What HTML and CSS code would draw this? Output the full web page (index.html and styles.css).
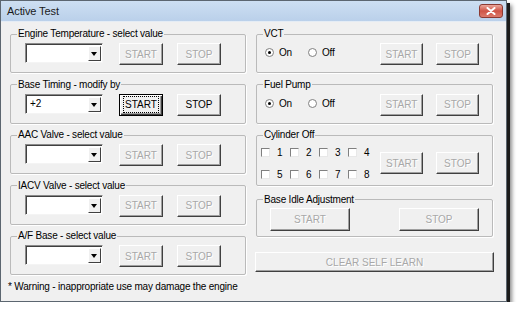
FILE: index.html
```html
<!DOCTYPE html>
<html>
<head>
    <title>Active Test</title>
    <meta charset="UTF-8">
    <link rel="stylesheet" href="styles.css">
</head>
<body>
    <div class="window">
        <div class="title-bar">
            <span class="title">Active Test</span>
            <span class="close-btn">
                <svg width="10" height="8" viewBox="0 0 10 8">
                    <path d="M1.5 1 L8.5 7 M8.5 1 L1.5 7" stroke="#fff" stroke-width="2" stroke-linecap="round"/>
                </svg>
            </span>
        </div>
        <div class="content">
            <div class="column">
                <fieldset class="group">
                    <legend>Engine Temperature - select value</legend>
                    <div class="row">
                        <div class="combo"><span class="combo-value"></span><span class="combo-arrow"></span></div>
                        <button class="btn" disabled>START</button>
                        <button class="btn" disabled>STOP</button>
                    </div>
                </fieldset>

                <fieldset class="group">
                    <legend>Base Timing - modify by</legend>
                    <div class="row">
                        <div class="combo"><span class="combo-value">+2</span><span class="combo-arrow"></span></div>
                        <button class="btn default-btn"><span class="focus-rect">START</span></button>
                        <button class="btn">STOP</button>
                    </div>
                </fieldset>

                <fieldset class="group">
                    <legend>AAC Valve - select value</legend>
                    <div class="row">
                        <div class="combo"><span class="combo-value"></span><span class="combo-arrow"></span></div>
                        <button class="btn" disabled>START</button>
                        <button class="btn" disabled>STOP</button>
                    </div>
                </fieldset>

                <fieldset class="group">
                    <legend>IACV Valve - select value</legend>
                    <div class="row">
                        <div class="combo"><span class="combo-value"></span><span class="combo-arrow"></span></div>
                        <button class="btn" disabled>START</button>
                        <button class="btn" disabled>STOP</button>
                    </div>
                </fieldset>

                <fieldset class="group">
                    <legend>A/F Base - select value</legend>
                    <div class="row">
                        <div class="combo"><span class="combo-value"></span><span class="combo-arrow"></span></div>
                        <button class="btn" disabled>START</button>
                        <button class="btn" disabled>STOP</button>
                    </div>
                </fieldset>

                <p class="warning">* Warning - inappropriate use may damage the engine</p>
            </div>

            <div class="column">
                <fieldset class="group">
                    <legend>VCT</legend>
                    <div class="row option-row">
                        <div class="radio-group">
                            <label class="option"><span class="radio checked"></span>On</label>
                            <label class="option"><span class="radio"></span>Off</label>
                        </div>
                        <button class="btn small-btn" disabled>START</button>
                        <button class="btn small-btn" disabled>STOP</button>
                    </div>
                </fieldset>

                <fieldset class="group">
                    <legend>Fuel Pump</legend>
                    <div class="row option-row">
                        <div class="radio-group">
                            <label class="option"><span class="radio checked"></span>On</label>
                            <label class="option"><span class="radio"></span>Off</label>
                        </div>
                        <button class="btn small-btn" disabled>START</button>
                        <button class="btn small-btn" disabled>STOP</button>
                    </div>
                </fieldset>

                <fieldset class="group cylinder-group">
                    <legend>Cylinder Off</legend>
                    <div class="row cylinder-row">
                        <div class="check-grid">
                            <label class="check-item"><span class="check"></span>1</label>
                            <label class="check-item"><span class="check"></span>2</label>
                            <label class="check-item"><span class="check"></span>3</label>
                            <label class="check-item"><span class="check"></span>4</label>
                            <label class="check-item"><span class="check"></span>5</label>
                            <label class="check-item"><span class="check"></span>6</label>
                            <label class="check-item"><span class="check"></span>7</label>
                            <label class="check-item"><span class="check"></span>8</label>
                        </div>
                        <button class="btn small-btn" disabled>START</button>
                        <button class="btn small-btn" disabled>STOP</button>
                    </div>
                </fieldset>

                <fieldset class="group idle-group">
                    <legend>Base Idle Adjustment</legend>
                    <div class="row idle-row">
                        <button class="btn wide-btn" disabled>START</button>
                        <button class="btn wide-btn" disabled>STOP</button>
                    </div>
                </fieldset>

                <button class="btn clear-btn" disabled>CLEAR SELF LEARN</button>
            </div>
        </div>
    </div>
</body>
</html>
```

FILE: styles.css
```css
* {
    box-sizing: border-box;
}

body {
    margin: 0;
    background: #fff;
    font-family: "Liberation Sans", Arial, sans-serif;
    font-size: 10px;
    letter-spacing: -0.2px;
    color: #000;
}

.window {
    width: 507px;
    height: 302px;
    display: flex;
    flex-direction: column;
    border: 1px solid #5c6670;
    background-color: #f0f0f0;
    box-shadow: 3px 3px 0 #1c1c1c, 5px 5px 4px rgba(0, 0, 0, 0.45);
}

.title-bar {
    height: 21px;
    display: flex;
    align-items: center;
    justify-content: space-between;
    padding: 0 3px 0 6px;
    background: linear-gradient(#cddff2, #bad0ea);
    border-bottom: 1px solid #e4ecf5;
}

.title {
    font-size: 11px;
    letter-spacing: -0.1px;
    color: #1a1a1a;
}

.close-btn {
    width: 24px;
    height: 14px;
    display: flex;
    align-items: center;
    justify-content: center;
    border: 1px solid #8c3a32;
    border-radius: 3px;
    background: linear-gradient(#eaa79c, #cf5446 50%, #dc7a6c);
}

.content {
    flex: 1;
    display: grid;
    grid-template-columns: 236px 237px;
    column-gap: 10px;
    align-items: start;
    padding: 6px 0 0 9px;
}

.column {
    display: flex;
    flex-direction: column;
    gap: 5.5px;
}

/* Group boxes */
.group {
    margin: 0;
    padding: 3px 0 7px 0;
    min-width: 0;
    border: 1px solid #bababa;
    border-radius: 2px;
    box-shadow: 1px 1px 0 #fff;
}

.group legend {
    margin-left: 6px;
    padding: 0 1px;
    line-height: 12px;
    font-size: 10px;
}

.row {
    display: flex;
    align-items: flex-start;
    padding-left: 14px;
}

/* Combo box */
.combo {
    width: 78px;
    height: 20px;
    display: flex;
    margin-right: 16px;
    background-color: #fff;
    border: 1px solid;
    border-color: #8a8a8a #f4f4f4 #f4f4f4 #8a8a8a;
    box-shadow: inset 1px 1px 0 #404040;
}

.combo-value {
    flex: 1;
    padding: 3px 0 0 4px;
}

.combo-arrow {
    width: 13px;
    margin: 2px 1px 1px 0;
    position: relative;
    background-color: #f0f0f0;
    border: 1px solid;
    border-color: #fff #404040 #404040 #fff;
}

.combo-arrow::after {
    content: "";
    position: absolute;
    left: 2px;
    top: 5px;
    border-left: 3.5px solid transparent;
    border-right: 3.5px solid transparent;
    border-top: 4px solid #000;
}

/* Buttons */
.btn {
    width: 44px;
    height: 22px;
    margin-right: 14px;
    padding: 0;
    font-family: inherit;
    font-size: 10px;
    letter-spacing: 0;
    color: #000;
    background-color: #f0f0f0;
    border: 1px solid;
    border-color: #fff #404040 #404040 #fff;
    box-shadow: inset -1px -1px 0 #a0a0a0;
}

.btn:disabled {
    color: #a8a8a8;
    text-shadow: 1px 1px 0 #fff;
}

.default-btn {
    border: 1px solid #000;
    box-shadow: inset 1px 1px 0 #fff, inset -1px -1px 0 #404040, inset -2px -2px 0 #a0a0a0;
}

.focus-rect {
    display: inline-block;
    padding: 2px 1px;
    border: 1px dotted #000;
    line-height: 11px;
}

/* Right column */
.option-row {
    padding-left: 8px;
}

.radio-group {
    width: 115px;
    display: flex;
    padding-top: 4px;
}

.option {
    width: 43px;
    display: flex;
    align-items: center;
    gap: 5px;
}

.radio {
    width: 9px;
    height: 9px;
    border: 1px solid #808080;
    border-radius: 50%;
    background-color: #fff;
    display: flex;
    align-items: center;
    justify-content: center;
}

.radio.checked::after {
    content: "";
    width: 3px;
    height: 3px;
    border-radius: 50%;
    background-color: #000;
}

.small-btn {
    width: 43px;
    margin-right: 13px;
}

.cylinder-group {
    padding: 2px 0 2px 0;
}

.cylinder-row {
    align-items: center;
    padding-left: 4px;
}

.check-grid {
    width: 120px;
    display: grid;
    grid-template-columns: repeat(4, 29px);
    row-gap: 4px;
}

.check-item {
    height: 18px;
    display: flex;
    align-items: center;
    gap: 7px;
}

.check {
    width: 9px;
    height: 9px;
    background-color: #fff;
    border: 1px solid;
    border-color: #808080 #e8e8e8 #e8e8e8 #808080;
}

.idle-group {
    margin-top: 2px;
    padding: 2px 0 5px 0;
}

.idle-row {
    gap: 49px;
    padding-left: 13px;
}

.wide-btn {
    width: 80px;
    height: 23px;
    margin: 0;
}

.clear-btn {
    width: 239px;
    height: 20px;
    margin: 10px 0 0 -1px;
}

.warning {
    margin: 0 0 0 -2px;
    line-height: 12px;
}
```
